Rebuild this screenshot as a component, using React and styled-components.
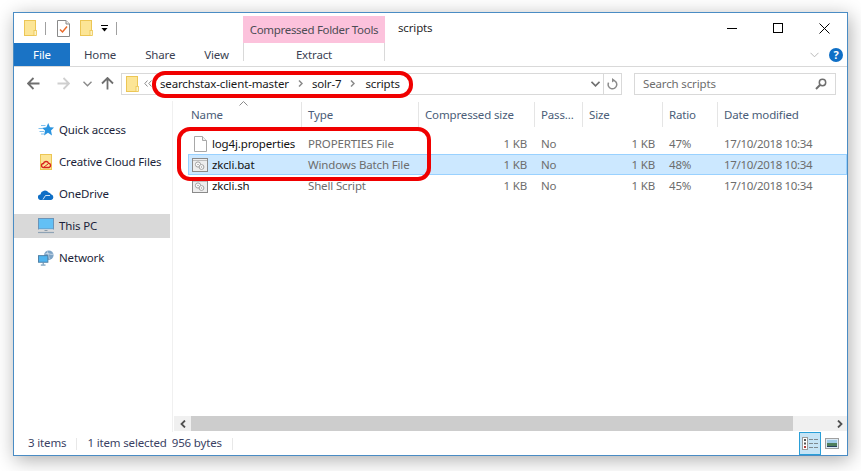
import React from 'react';
import styled, { createGlobalStyle } from 'styled-components';

const GlobalStyle = createGlobalStyle`
  html, body {
    margin: 0;
    background: #ffffff;
  }
  body {
    font-family: 'Noto Sans', 'Open Sans', sans-serif;
    font-size: 11.5px;
    letter-spacing: -0.15px;
  }
  #root {
    min-height: 471px;
    padding: 12px 0 0 13px;
    overflow: hidden;
  }
  * {
    box-sizing: border-box;
  }
`;

const Window = styled.div`
  position: relative;
  width: 835px;
  height: 444px;
  display: flex;
  flex-direction: column;
  background: #ffffff;
  border: 1px solid #4a8cc4;
  box-shadow: 2px 4px 18px rgba(0, 0, 0, 0.32);
`;

const TitleBar = styled.div`
  height: 30px;
  display: flex;
  align-items: flex-end;
`;

const QuickBar = styled.div`
  width: 229px;
  height: 30px;
  display: flex;
  align-items: center;
  padding-left: 10px;
`;

const QuickSep = styled.span`
  width: 1px;
  height: 13px;
  background: #a0a0a0;
  margin: 0 ${p => p.$right}px 0 ${p => p.$left}px;
`;

const ContextTab = styled.div`
  width: 142px;
  height: 27px;
  background: #fcc2dc;
  color: #4d4d55;
  display: flex;
  align-items: center;
  justify-content: center;
  letter-spacing: -0.32px;
`;

const WindowTitle = styled.div`
  height: 30px;
  margin-left: 13px;
  padding-bottom: 2px;
  display: flex;
  align-items: center;
  color: #2a2a2a;
`;

const Controls = styled.div`
  margin-left: auto;
  display: flex;
`;

const ControlButton = styled.div`
  width: 46px;
  height: 30px;
  display: flex;
  align-items: center;
  justify-content: center;
`;

const RibbonTabs = styled.div`
  height: 24px;
  display: flex;
  border-bottom: 1px solid #d9d9d9;
`;

const FileTab = styled.div`
  width: 56px;
  height: 23px;
  background: #1a73c5;
  color: #ffffff;
  display: flex;
  align-items: center;
  justify-content: center;
`;

const TabGroup = styled.div`
  width: 173px;
  height: 23px;
  display: flex;
  align-items: center;
  gap: 29px;
  padding-left: 14px;
  color: #3b3f52;
`;

const ExtractTab = styled.div`
  width: 142px;
  height: 18px;
  border-left: 1px solid #d9d9d9;
  border-right: 1px solid #d9d9d9;
  color: #3b3f52;
  display: flex;
  align-items: center;
  justify-content: center;
  padding-top: 4px;
`;

const RibbonRight = styled.div`
  margin-left: auto;
  height: 23px;
  display: flex;
  align-items: center;
  gap: 10px;
  margin-right: 4px;
`;

const Help = styled.div`
  width: 14px;
  height: 14px;
  border-radius: 50%;
  background: #0f6fc6;
  color: #ffffff;
  font-weight: 700;
  font-size: 11px;
  line-height: 14px;
  text-align: center;
`;

const AddressRow = styled.div`
  height: 34px;
  display: flex;
  align-items: center;
  padding: 0 0 1px 13px;
`;

const NavIcon = styled.span`
  display: flex;
  margin-left: ${p => p.$left || 0}px;
`;

const AddressBox = styled.div`
  width: 501px;
  height: 22px;
  margin-left: 7px;
  border: 1px solid #d9d9d9;
  display: flex;
  align-items: center;
  padding-left: 4px;
  color: #1a1a1a;
`;

const Crumbs = styled.div`
  flex: 1;
  display: flex;
  align-items: center;
`;

const Crumb = styled.span`
  margin-left: ${p => p.$left}px;
`;

const CrumbArrow = styled.span`
  display: flex;
  margin-left: ${p => p.$left}px;
`;

const AddressEnd = styled.div`
  width: 18px;
  height: 20px;
  border-left: 1px solid #d9d9d9;
  display: flex;
  align-items: center;
  justify-content: center;
`;

const SearchBox = styled.div`
  width: 202px;
  height: 22px;
  margin-left: 12px;
  border: 1px solid #d9d9d9;
  display: flex;
  align-items: center;
  justify-content: space-between;
  padding: 0 8px 0 8px;
  color: #6d6d6d;
`;

const Main = styled.div`
  flex: 1;
  min-height: 0;
  display: flex;
`;

const Sidebar = styled.div`
  width: 159px;
  display: flex;
  flex-direction: column;
  gap: 8px;
  padding: 17px 2px 0 0;
  border-right: 1px solid #f0f0f0;
`;

const NavRow = styled.div`
  height: 24px;
  display: flex;
  align-items: center;
  gap: 5px;
  padding-left: 24px;
  color: #1c1f3a;
  background: ${p => (p.$active ? '#d9d9d9' : 'transparent')};
`;

const NavGlyph = styled.span`
  width: 16px;
  height: 16px;
  display: flex;
  justify-content: center;
  align-items: center;
`;

const NavLabel = styled.span`
  padding-bottom: 2px;
`;

const Content = styled.div`
  flex: 1;
  min-width: 0;
  display: flex;
  flex-direction: column;
  padding: 0 0 1px 1px;
`;

const columns = '113px 117px 116px 48px 80px 55px 1fr';

const Header = styled.div`
  position: relative;
  display: grid;
  grid-template-columns: ${columns};
  height: 26px;
  margin-left: 14px;
  padding-top: 1px;
  color: #4a5d78;
`;

const HeaderCell = styled.div`
  display: flex;
  align-items: center;
  padding-left: ${p => (p.$first ? 3 : 6)}px;
  border-left: ${p => (p.$first ? 'none' : '1px solid #e5e5e5')};
  white-space: nowrap;
`;

const SortCaret = styled.svg`
  position: absolute;
  left: 51px;
  top: 0;
`;

const FileList = styled.div`
  flex: 1;
  padding-top: 6px;
  margin-left: 14px;
`;

const FileRow = styled.div`
  display: grid;
  grid-template-columns: ${columns};
  height: 21px;
  align-items: center;
  color: #6d6d6d;
  background: ${p => (p.$selected ? '#cce8ff' : 'transparent')};
  box-shadow: ${p => (p.$selected ? 'inset 0 0 0 1px #99d1ff' : 'none')};
`;

const NameCell = styled.div`
  display: flex;
  align-items: center;
  gap: 4px;
  padding-left: 4px;
  color: #111111;
  white-space: nowrap;
`;

const FileGlyph = styled.span`
  width: 16px;
  display: flex;
  justify-content: center;
`;

const Cell = styled.div`
  padding: 0 7px;
  text-align: ${p => (p.$right ? 'right' : 'left')};
  white-space: nowrap;
`;

const DateCell = styled(Cell)`
  letter-spacing: -0.33px;
`;

const Scrollbar = styled.div`
  height: 15px;
  display: flex;
  background: #f0f0f0;
`;

const ScrollEnd = styled.div`
  width: 17px;
  display: flex;
  align-items: center;
  justify-content: center;
`;

const ScrollThumb = styled.div`
  width: 602px;
  background: #cdcdcd;
`;

const ScrollRest = styled.div`
  flex: 1;
  display: flex;
  align-items: center;
  justify-content: flex-end;
  padding-right: 4px;
`;

const StatusBar = styled.div`
  height: 23px;
  display: flex;
  align-items: center;
  padding-left: 14px;
  color: #3a3f63;
`;

const StatusText = styled.span`
  margin-left: ${p => p.$left || 0}px;
  padding-bottom: 2px;
`;

const StatusSep = styled.span`
  width: 1px;
  height: 12px;
  background: #e8e8e8;
  margin: 0 ${p => p.$right}px 0 ${p => p.$left}px;
`;

const ViewButtons = styled.div`
  margin-left: auto;
  display: flex;
  align-items: center;
  padding-right: 4px;
`;

const ViewButton = styled.div`
  width: 22px;
  height: 23px;
  display: flex;
  align-items: center;
  justify-content: center;
  background: ${p => (p.$active ? '#c6e4f6' : 'transparent')};
  border: 1px solid ${p => (p.$active ? '#2a9fd8' : 'transparent')};
`;

// the red marker rings drawn over the screenshot
const Marker = styled.div`
  position: absolute;
  left: ${p => p.$x}px;
  top: ${p => p.$y}px;
  width: ${p => p.$w}px;
  height: ${p => p.$h}px;
  border: 4px solid #f00000;
  border-radius: 13px;
  pointer-events: none;
`;

const FolderIcon = () => (
  <svg width="13" height="16" viewBox="0 0 13 16">
    <rect x="0.5" y="0.5" width="11" height="15" fill="#fce596" stroke="#ecc655" />
    <rect x="10" y="10.5" width="2.5" height="5" fill="#fdf2c4" stroke="#ecc655" strokeWidth="0.8" />
  </svg>
);

const CheckDocIcon = () => (
  <svg width="13" height="17" viewBox="0 0 13 17">
    <path d="M0.5 0.5H9L12.5 4V16.5H0.5Z" fill="#fff" stroke="#8a8a8a" />
    <path d="M9 0.5V4H12.5" fill="#eee" stroke="#8a8a8a" />
    <path d="M3 9.5L5.5 12L10 6.5" fill="none" stroke="#ea6a2a" strokeWidth="1.5" />
  </svg>
);

const DropIcon = () => (
  <svg width="7" height="7" viewBox="0 0 7 7">
    <rect x="0" y="0" width="7" height="1" fill="#000" />
    <path d="M0.5 3H6.5L3.5 6.5Z" fill="#000" />
  </svg>
);

const MinIcon = () => (
  <svg width="10" height="10" viewBox="0 0 10 10">
    <path d="M0 5.5H10" stroke="#000" />
  </svg>
);

const MaxIcon = () => (
  <svg width="10" height="10" viewBox="0 0 10 10">
    <rect x="0.5" y="0.5" width="9" height="9" fill="none" stroke="#000" />
  </svg>
);

const CloseIcon = () => (
  <svg width="11" height="11" viewBox="0 0 11 11">
    <path d="M0.5 0.5L10.5 10.5M10.5 0.5L0.5 10.5" stroke="#000" />
  </svg>
);

const ChevronDown = ({ color = '#b8b8b8', width = 1 }) => (
  <svg width="9" height="6" viewBox="0 0 9 6">
    <path d="M0.5 0.8L4.5 4.8L8.5 0.8" fill="none" stroke={color} strokeWidth={width} />
  </svg>
);

const Arrow = ({ color, flip, up }) => (
  <svg
    width="13"
    height="13"
    viewBox="0 0 13 13"
    style={{ transform: up ? 'rotate(90deg)' : flip ? 'scaleX(-1)' : 'none' }}
  >
    <path d="M1 6.5H12.5M6.5 1L1 6.5L6.5 12" fill="none" stroke={color} strokeWidth="1.8" />
  </svg>
);

const CrumbChevron = () => (
  <svg width="5" height="7" viewBox="0 0 5 7">
    <path d="M1 0.5L4 3.5L1 6.5" fill="none" stroke="#8a8a8a" strokeWidth="1.5" />
  </svg>
);

const DoubleChevron = () => (
  <svg width="8" height="7" viewBox="0 0 8 7">
    <path d="M3.5 0.5L0.8 3.5L3.5 6.5M7.5 0.5L4.8 3.5L7.5 6.5" fill="none" stroke="#8a8a8a" />
  </svg>
);

const RefreshIcon = () => (
  <svg width="11" height="12" viewBox="0 0 11 12">
    <path d="M5.5 2.2A4.3 4.3 0 1 1 1.6 4.6" fill="none" stroke="#8c8c8c" strokeWidth="1.5" />
    <path d="M5 0L8 2.3L5 4.6Z" fill="#8c8c8c" />
  </svg>
);

const SearchIcon = () => (
  <svg width="12" height="12" viewBox="0 0 12 12">
    <circle cx="7.5" cy="4.5" r="3.2" fill="none" stroke="#6e6e6e" strokeWidth="1.5" />
    <path d="M5 7L1 11" stroke="#6e6e6e" strokeWidth="2" />
  </svg>
);

const StarIcon = () => (
  <svg width="16" height="14" viewBox="0 0 16 14">
    <path d="M10.2 0L12 4.2L16 4.6L13 7.4L14 12.5L10 9.8L6 12.5L7 7.4L4 5L8.4 4.2Z" fill="#2a94e0" />
    <path d="M3 2.5H7.5M0.5 5.5H5M1.5 8.5H6M3 11H6" stroke="#7fc0ee" strokeWidth="1" />
  </svg>
);

const CloudFolderIcon = () => (
  <svg width="12" height="16" viewBox="0 0 12 16">
    <rect x="0.5" y="0.5" width="11" height="15" fill="#fce596" stroke="#ecc655" />
    <path
      d="M3.5 13.5A2 2 0 0 1 3.5 9.5A2.6 2.6 0 0 1 8.5 9.2A2.2 2.2 0 0 1 9 13.5Z"
      fill="none"
      stroke="#d8241f"
      strokeWidth="1.4"
    />
    <path d="M4 13L8 10" stroke="#d8241f" strokeWidth="1" />
  </svg>
);

const OneDriveIcon = () => (
  <svg width="16" height="11" viewBox="0 0 16 11">
    <path
      d="M3 11A2.8 2.8 0 0 1 2.4 5.4A4.5 4.5 0 0 1 10.6 3.6A3.4 3.4 0 0 1 13 5.2A3 3 0 0 1 13.2 11Z"
      fill="#0f6fc6"
    />
    <path d="M5 10.5L7.5 6.5L12 6.5" fill="none" stroke="#ffffff" strokeWidth="0.8" />
  </svg>
);

const MonitorIcon = () => (
  <svg width="16" height="16" viewBox="0 0 16 16">
    <rect x="0.5" y="0.5" width="15" height="10.5" fill="#62c0f5" stroke="#6b94b8" />
    <path d="M1 11.5H15" stroke="#c3d2de" />
    <path d="M6.5 12.5H9.5" stroke="#8a9bab" />
    <path d="M0 14.5H16" stroke="#8fa3b5" strokeWidth="1.2" />
  </svg>
);

const NetworkIcon = () => (
  <svg width="17" height="16" viewBox="0 0 17 16">
    <circle cx="11.5" cy="5" r="5" fill="#7ea4c6" />
    <path d="M8 3.5C10 2 13 5 16 4M10 1L12 9" fill="none" stroke="#d9e6f0" strokeWidth="0.8" />
    <rect x="0.5" y="5.5" width="10" height="7" fill="#4fb4ef" stroke="#4d7da3" />
    <path d="M5.5 13V15M3 15.5H8" stroke="#4d7da3" />
  </svg>
);

const BlankFileIcon = () => (
  <svg width="13" height="16" viewBox="0 0 13 16">
    <path d="M0.5 0.5H8.5L12.5 4.5V15.5H0.5Z" fill="#fff" stroke="#a8a8a8" />
    <path d="M8.5 0.5V4.5H12.5" fill="#f2f2f2" stroke="#a8a8a8" />
  </svg>
);

const ScriptIcon = () => (
  <svg width="16" height="14" viewBox="0 0 16 14">
    <rect x="0.5" y="0.5" width="15" height="13" fill="#ededed" stroke="#8a8a8a" />
    <path d="M1 2.5H15" stroke="#bdbdbd" />
    <circle cx="6" cy="6.5" r="2.6" fill="#fff" stroke="#a0a0a0" />
    <circle cx="9.5" cy="9" r="2.4" fill="#fff" stroke="#a0a0a0" />
    <circle cx="6" cy="6.5" r="0.8" fill="#a0a0a0" />
    <circle cx="9.5" cy="9" r="0.8" fill="#a0a0a0" />
  </svg>
);

const DetailsViewIcon = () => (
  <svg width="16" height="13" viewBox="0 0 16 13">
    <rect x="0.5" y="0.5" width="5" height="12" fill="#fff" stroke="#9a9a9a" />
    <rect x="2" y="2" width="2" height="2" fill="#555" />
    <rect x="2" y="5.5" width="2" height="2" fill="#555" />
    <rect x="2" y="9" width="2" height="2" fill="#b03a3a" />
    <path d="M7 2.5H11M12 2.5H16M7 6.5H11M12 6.5H16M7 10.5H11M12 10.5H16" stroke="#7f8a90" />
  </svg>
);

const LargeViewIcon = () => (
  <svg width="14" height="11" viewBox="0 0 14 11">
    <rect x="0.5" y="0.5" width="13" height="10" fill="#dcebf5" stroke="#a0a0a0" />
    <rect x="2" y="2" width="10" height="3" fill="#9ecbe8" />
    <rect x="2" y="5" width="10" height="3" fill="#4f7f5d" />
    <rect x="2" y="8" width="10" height="1" fill="#26415e" />
  </svg>
);

const ScrollLeft = () => (
  <svg width="6" height="8" viewBox="0 0 6 8">
    <path d="M5 0.5L1.5 4L5 7.5" fill="none" stroke="#505050" strokeWidth="1.8" />
  </svg>
);

const ScrollRight = () => (
  <svg width="6" height="8" viewBox="0 0 6 8">
    <path d="M1 0.5L4.5 4L1 7.5" fill="none" stroke="#505050" strokeWidth="1.8" />
  </svg>
);

const navItems = [
  { label: 'Quick access', icon: <StarIcon /> },
  { label: 'Creative Cloud Files', icon: <CloudFolderIcon /> },
  { label: 'OneDrive', icon: <OneDriveIcon /> },
  { label: 'This PC', icon: <MonitorIcon />, active: true },
  { label: 'Network', icon: <NetworkIcon /> },
];

const headers = ['Name', 'Type', 'Compressed size', 'Pass...', 'Size', 'Ratio', 'Date modified'];

const files = [
  { name: 'log4j.properties', type: 'PROPERTIES File', ratio: '47%', icon: <BlankFileIcon /> },
  { name: 'zkcli.bat', type: 'Windows Batch File', ratio: '48%', icon: <ScriptIcon />, selected: true },
  { name: 'zkcli.sh', type: 'Shell Script', ratio: '45%', icon: <ScriptIcon /> },
];

export default function App() {
  return (
    <>
      <GlobalStyle />
      <Window>
        <TitleBar>
          <QuickBar>
            <FolderIcon />
            <QuickSep $left={8} $right={11} />
            <CheckDocIcon />
            <NavIcon $left={10}>
              <FolderIcon />
            </NavIcon>
            <NavIcon $left={8}>
              <DropIcon />
            </NavIcon>
            <QuickSep $left={8} $right={0} />
          </QuickBar>
          <ContextTab>Compressed Folder Tools</ContextTab>
          <WindowTitle>scripts</WindowTitle>
          <Controls>
            <ControlButton><MinIcon /></ControlButton>
            <ControlButton><MaxIcon /></ControlButton>
            <ControlButton><CloseIcon /></ControlButton>
          </Controls>
        </TitleBar>

        <RibbonTabs>
          <FileTab>File</FileTab>
          <TabGroup>
            <span>Home</span>
            <span>Share</span>
            <span>View</span>
          </TabGroup>
          <ExtractTab>Extract</ExtractTab>
          <RibbonRight>
            <ChevronDown />
            <Help>?</Help>
          </RibbonRight>
        </RibbonTabs>

        <AddressRow>
          <Arrow color="#6f6f6f" />
          <NavIcon $left={17}>
            <Arrow color="#cfcfcf" flip />
          </NavIcon>
          <NavIcon $left={13}>
            <ChevronDown color="#8a8a8a" width={1.4} />
          </NavIcon>
          <NavIcon $left={9}>
            <Arrow color="#6f6f6f" up />
          </NavIcon>
          <AddressBox>
            <FolderIcon />
            <Crumbs>
              <CrumbArrow $left={5}><DoubleChevron /></CrumbArrow>
              <Crumb $left={8}>searchstax-client-master</Crumb>
              <CrumbArrow $left={9}><CrumbChevron /></CrumbArrow>
              <Crumb $left={9}>solr-7</Crumb>
              <CrumbArrow $left={9}><CrumbChevron /></CrumbArrow>
              <Crumb $left={10}>scripts</Crumb>
            </Crumbs>
            <ChevronDown color="#6f6f6f" width={1.6} />
            <NavIcon $left={3} />
            <AddressEnd><RefreshIcon /></AddressEnd>
          </AddressBox>
          <SearchBox>
            <span>Search scripts</span>
            <SearchIcon />
          </SearchBox>
        </AddressRow>

        <Main>
          <Sidebar>
            {navItems.map(item => (
              <NavRow key={item.label} $active={item.active}>
                <NavGlyph>{item.icon}</NavGlyph>
                <NavLabel>{item.label}</NavLabel>
              </NavRow>
            ))}
          </Sidebar>
          <Content>
            <Header>
              <SortCaret width="9" height="5" viewBox="0 0 9 5">
                <path d="M0.5 4.5L4.5 0.5L8.5 4.5" fill="none" stroke="#8a8a8a" />
              </SortCaret>
              {headers.map((label, i) => (
                <HeaderCell key={label} $first={i === 0}>{label}</HeaderCell>
              ))}
            </Header>
            <FileList>
              {files.map(file => (
                <FileRow key={file.name} $selected={file.selected}>
                  <NameCell>
                    <FileGlyph>{file.icon}</FileGlyph>
                    <span>{file.name}</span>
                  </NameCell>
                  <Cell>{file.type}</Cell>
                  <Cell $right>1 KB</Cell>
                  <Cell>No</Cell>
                  <Cell $right>1 KB</Cell>
                  <Cell>{file.ratio}</Cell>
                  <DateCell>17/10/2018 10:34</DateCell>
                </FileRow>
              ))}
            </FileList>
            <Scrollbar>
              <ScrollEnd><ScrollLeft /></ScrollEnd>
              <ScrollThumb />
              <ScrollRest><ScrollRight /></ScrollRest>
            </Scrollbar>
          </Content>
        </Main>

        <StatusBar>
          <StatusText>3 items</StatusText>
          <StatusSep $left={10} $right={10} />
          <StatusText>1 item selected</StatusText>
          <StatusText $left={5}>956 bytes</StatusText>
          <StatusSep $left={10} $right={0} />
          <ViewButtons>
            <ViewButton $active><DetailsViewIcon /></ViewButton>
            <ViewButton><LargeViewIcon /></ViewButton>
          </ViewButtons>
        </StatusBar>

        <Marker $x={138} $y={58} $w={261} $h={27} />
        <Marker $x={163} $y={114} $w={254} $h={54} />
      </Window>
    </>
  );
}
